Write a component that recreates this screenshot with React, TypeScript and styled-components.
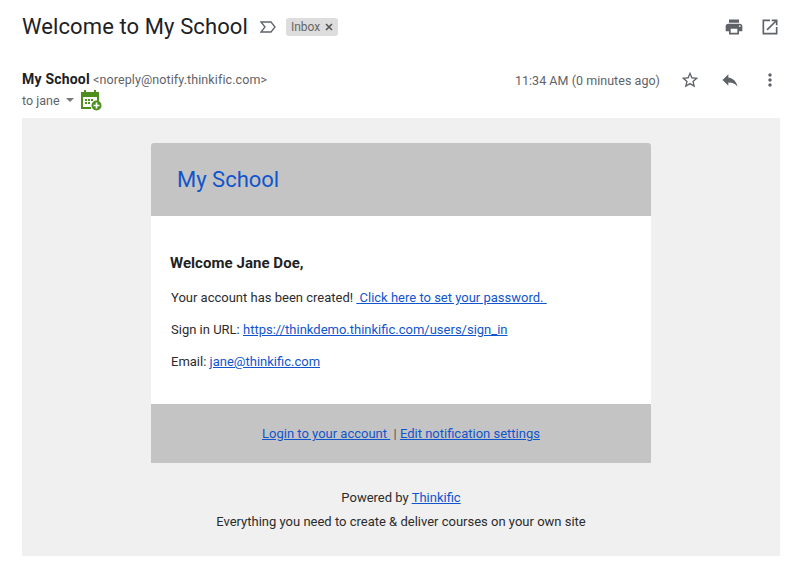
import React from "react";
import styled, { createGlobalStyle } from "styled-components";

const Global = createGlobalStyle`
  html, body { margin: 0; padding: 0; background: #fff; }
  body { font-family: Roboto, "Liberation Sans", sans-serif; color: #222; }
`;

const Page = styled.div`
  width: 804px;
  height: 571px;
  padding: 0 24px 0 22px;
  box-sizing: border-box;
  overflow: hidden;
`;

const TitleRow = styled.div`
  height: 54px;
  display: flex;
  align-items: center;
`;

const Title = styled.h1`
  margin: 0;
  font-weight: 400;
  font-size: 22px;
  line-height: 28px;
  color: #202124;
  letter-spacing: 0.1px;
`;

const Marker = styled.svg`
  width: 16px;
  height: 12px;
  margin-left: 12px;
  flex: none;
`;

const Label = styled.span`
  display: inline-flex;
  align-items: center;
  gap: 5px;
  margin-left: 10px;
  height: 18px;
  padding: 0 5px 0 5px;
  border-radius: 3px;
  background: #dddddd;
  color: #666;
  font-size: 12px;
`;

const Spacer = styled.div`
  flex: 1;
`;

const TopIcons = styled.div`
  display: flex;
  align-items: center;
  gap: 16px;
`;

const IconSvg = styled.svg`
  width: 20px;
  height: 20px;
  fill: #5f6368;
  display: block;
`;

const Header = styled.div`
  display: flex;
  justify-content: space-between;
  height: 64px;
`;

const Sender = styled.div`
  padding-top: 16px;
`;

const FromLine = styled.div`
  font-size: 12.5px;
  letter-spacing: 0.1px;
  line-height: 18px;
  color: #5f6368;
`;

const Name = styled.b`
  font-size: 14px;
  font-weight: 700;
  letter-spacing: 0.2px;
  color: #202124;
`;

const ToLine = styled.div`
  display: flex;
  align-items: center;
  height: 22px;
  font-size: 12.5px;
  color: #5f6368;
`;

const Caret = styled.span`
  width: 0;
  height: 0;
  margin-left: 6px;
  border-left: 4px solid transparent;
  border-right: 4px solid transparent;
  border-top: 4px solid #777;
`;

const Calendar = styled.svg`
  width: 22px;
  height: 22px;
  margin-left: 6px;
`;

const Meta = styled.div`
  display: flex;
  align-items: center;
  height: 24px;
  margin-top: 14px;
`;

const Time = styled.span`
  font-size: 12.5px;
  letter-spacing: 0.04px;
  color: #5f6368;
  margin-right: 20px;
`;

const MetaIcons = styled.div`
  display: flex;
  align-items: center;
  gap: 20px;
`;

const Mail = styled.div`
  height: 438px;
  background: #f0f0f0;
  padding-top: 25px;
  box-sizing: border-box;
`;

const Card = styled.div`
  width: 500px;
  margin-left: 129px;
`;

const CardHead = styled.div`
  height: 73px;
  display: flex;
  align-items: center;
  padding-left: 26px;
  box-sizing: border-box;
  background: #c4c4c4;
  border-radius: 3px 3px 0 0;
  color: #1155cc;
  font-size: 22px;
`;

const CardBody = styled.div`
  height: 188px;
  box-sizing: border-box;
  padding: 37px 20px 0;
  background: #fff;
`;

const Greeting = styled.div`
  font-size: 15px;
  font-weight: 700;
  letter-spacing: 0.05px;
  line-height: 20px;
  margin-left: -1px;
  margin-bottom: 16px;
  color: #222;
`;

const Para = styled.p`
  margin: 0 0 14px;
  font-size: 13px;
  line-height: 18px;
  color: #2c2c2c;
`;

const Link = styled.a`
  color: #1155cc;
  text-decoration: underline;
  white-space: pre;
`;

const CardFoot = styled.div`
  height: 59px;
  display: flex;
  align-items: center;
  justify-content: center;
  background: #c4c4c4;
  font-size: 13px;
  color: #555;
  white-space: pre;
`;

const Powered = styled.div`
  text-align: center;
  font-size: 13px;
  line-height: 24px;
  padding-top: 23px;
  color: #2c2c2c;
`;

export default function App() {
  return (
    <Page>
      <Global />
      <TitleRow>
        <Title>Welcome to My School</Title>
        <Marker viewBox="0 0 16 12" fill="none" stroke="#5f6368" strokeWidth="1.3">
          <path d="M1 1h10l4 5-4 5H1l4-5z" />
        </Marker>
        <Label>
          Inbox
          <svg width="8" height="8" viewBox="0 0 8 8" stroke="#555" strokeWidth="1.6">
            <path d="M1 1l6 6M7 1L1 7" />
          </svg>
        </Label>
        <Spacer />
        <TopIcons>
          <IconSvg viewBox="0 0 24 24">
            <path d="M19 8H5c-1.66 0-3 1.34-3 3v6h4v4h12v-4h4v-6c0-1.66-1.34-3-3-3zm-3 11H8v-5h8v5zm3-7c-.55 0-1-.45-1-1s.45-1 1-1 1 .45 1 1-.45 1-1 1zm-1-9H6v4h12V3z" />
          </IconSvg>
          <IconSvg viewBox="0 0 24 24">
            <path d="M19 19H5V5h7V3H3v18h18v-9h-2v7zM14 3v2h3.59l-9.83 9.83 1.41 1.41L19 6.41V10h2V3h-7z" />
          </IconSvg>
        </TopIcons>
      </TitleRow>
      <Header>
        <Sender>
          <FromLine>
            <Name>My School</Name> &lt;noreply@notify.thinkific.com&gt;
          </FromLine>
          <ToLine>
            to jane
            <Caret />
            <Calendar viewBox="0 0 22 22">
              <path fill="#4c8f1f" d="M1 3h3V1h2v2h8V1h2v2h3v9h-2V8H3v10h8v2H1z" />
              <path fill="#4c8f1f" d="M5 10h2v2H5zM8 10h2v2H8zM11 10h2v2h-2zM5 13h2v2H5zM8 13h2v2H8z" />
              <circle cx="16.5" cy="16.5" r="5" fill="#4c8f1f" />
              <path stroke="#fff" strokeWidth="1.6" d="M16.5 13.5v6M13.5 16.5h6" />
            </Calendar>
          </ToLine>
        </Sender>
        <Meta>
          <Time>11:34 AM (0 minutes ago)</Time>
          <MetaIcons>
            <IconSvg viewBox="0 0 24 24">
              <path d="M22 9.24l-7.19-.62L12 2 9.19 8.63 2 9.24l5.46 4.73L5.82 21 12 17.27 18.18 21l-1.63-7.03L22 9.24zM12 15.4l-3.76 2.27 1-4.28-3.32-2.88 4.38-.38L12 6.1l1.71 4.04 4.38.38-3.32 2.88 1 4.28L12 15.4z" />
            </IconSvg>
            <IconSvg viewBox="0 0 24 24">
              <path d="M10 9V5l-7 7 7 7v-4.1c5 0 8.5 1.6 11 5.1-1-5-4-10-11-11z" />
            </IconSvg>
            <IconSvg viewBox="0 0 24 24">
              <path d="M12 8c1.1 0 2-.9 2-2s-.9-2-2-2-2 .9-2 2 .9 2 2 2zm0 2c-1.1 0-2 .9-2 2s.9 2 2 2 2-.9 2-2-.9-2-2-2zm0 6c-1.1 0-2 .9-2 2s.9 2 2 2 2-.9 2-2-.9-2-2-2z" />
            </IconSvg>
          </MetaIcons>
        </Meta>
      </Header>
      <Mail>
        <Card>
          <CardHead>My School</CardHead>
          <CardBody>
            <Greeting>Welcome Jane Doe,</Greeting>
            <Para>
              Your account has been created! <Link href="#"> Click here to set your password. </Link>
            </Para>
            <Para>
              Sign in URL: <Link href="#">https://thinkdemo.thinkific.com/users/sign_in</Link>
            </Para>
            <Para>
              Email: <Link href="#">jane@thinkific.com</Link>
            </Para>
          </CardBody>
          <CardFoot>
            <Link href="#">Login to your account </Link> | <Link href="#">Edit notification settings</Link>
          </CardFoot>
          <Powered>
            Powered by <Link href="#">Thinkific</Link>
            <br />
            Everything you need to create &amp; deliver courses on your own site
          </Powered>
        </Card>
      </Mail>
    </Page>
  );
}
